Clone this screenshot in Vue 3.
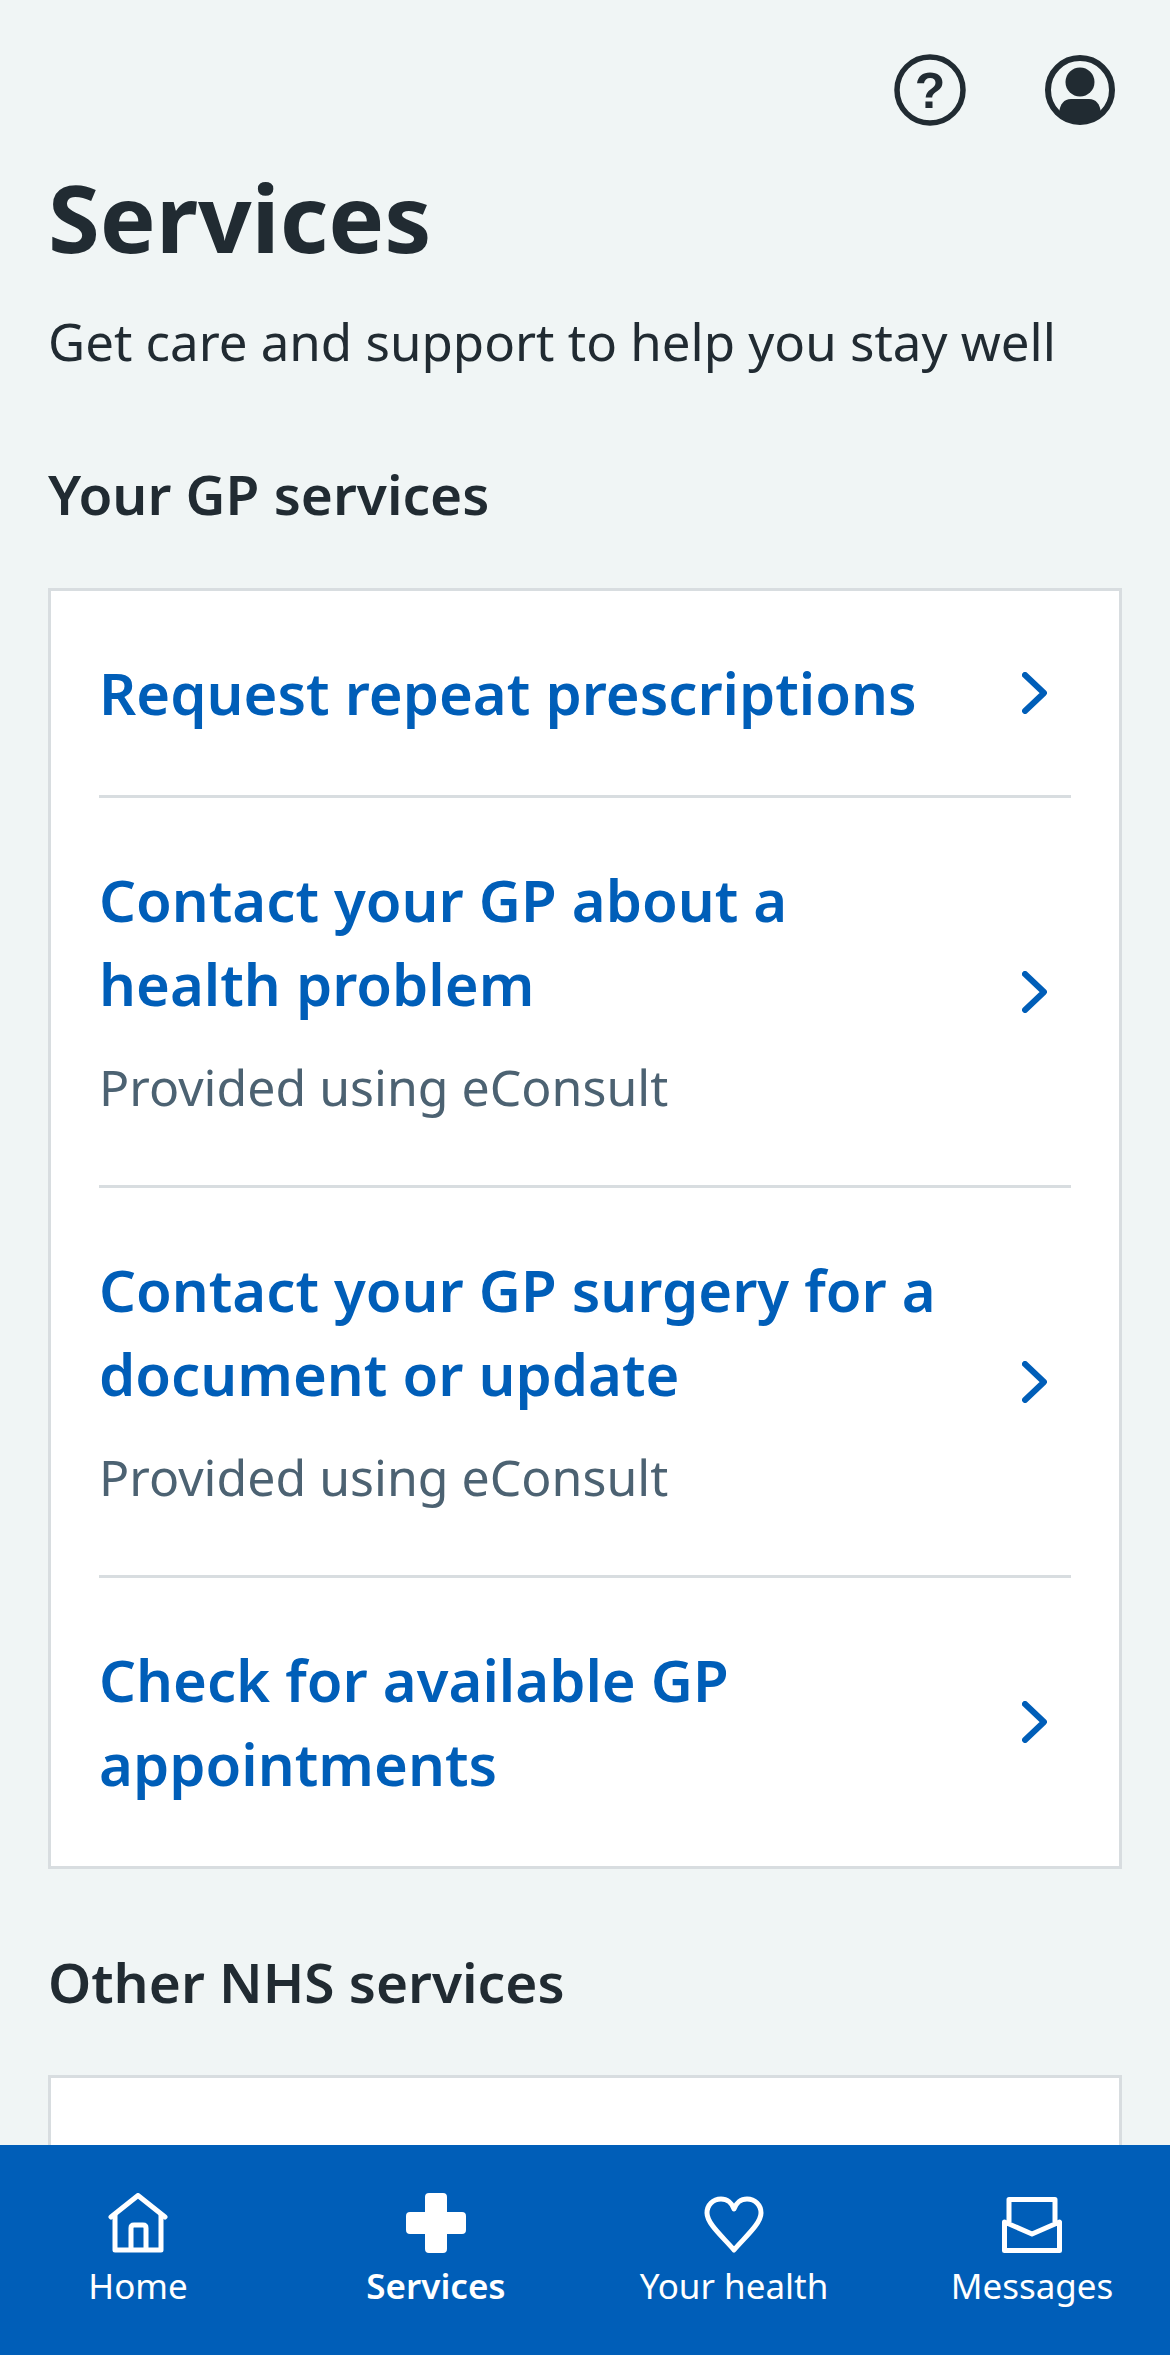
<script setup>
const rows = [
  { title: ['Request repeat prescriptions'] },
  { title: ['Contact your GP about a', 'health problem'], sub: 'Provided using eConsult' },
  { title: ['Contact your GP surgery for a', 'document or update'], sub: 'Provided using eConsult' },
  { title: ['Check for available GP', 'appointments'] },
]
</script>

<template>
  <div class="page">
    <main class="main">
      <div class="top">
        <svg class="top-icon" viewBox="0 0 72 72" width="72" height="72">
          <circle cx="36" cy="36" r="33" fill="none" stroke="#212b32" stroke-width="5.5" />
          <text class="q" x="36" y="54" text-anchor="middle">?</text>
        </svg>
        <svg class="top-icon" viewBox="0 0 72 72" width="72" height="72">
          <circle cx="36" cy="36" r="32" fill="none" stroke="#212b32" stroke-width="6" />
          <circle cx="36" cy="28" r="14.5" fill="#212b32" />
          <path d="M15 59 C16 50 20 45 27 45 H45 C52 45 56 50 57 59 C52 65 44 68 36 68 C28 68 20 65 15 59 Z" fill="#212b32" />
        </svg>
      </div>
      <h1 class="title">Services</h1>
      <p class="lead">Get care and support to help you stay well</p>
      <h2 class="section">Your GP services</h2>
      <div class="card">
        <a v-for="(r, i) in rows" :key="i" class="row">
          <div class="row-text">
            <div class="link">
              <span v-for="l in r.title" :key="l" class="line">{{ l }}</span>
            </div>
            <div v-if="r.sub" class="sub">{{ r.sub }}</div>
          </div>
          <svg class="chev" viewBox="0 0 25 42" width="25" height="42">
            <path d="M3 3 L22 21 L3 39" fill="none" stroke="#005eb8" stroke-width="6" stroke-linecap="round" stroke-linejoin="round" />
          </svg>
        </a>
      </div>
      <h2 class="section second">Other NHS services</h2>
      <div class="card tall"></div>
    </main>
    <nav class="nav">
      <div class="item">
        <svg viewBox="0 0 60 60" width="60" height="60">
          <path d="M3 24 L30 2.5 L57 24" fill="none" stroke="#fff" stroke-width="5" stroke-linecap="round" stroke-linejoin="round" />
          <path d="M7 21 V57 H53 V21" fill="none" stroke="#fff" stroke-width="5" stroke-linejoin="round" />
          <path d="M23 57 V35 Q23 32 26 32 H35 Q38 32 38 35 V57" fill="none" stroke="#fff" stroke-width="5" />
        </svg>
        <span>Home</span>
      </div>
      <div class="item active">
        <svg viewBox="0 0 60 60" width="60" height="60">
          <path d="M19 4 Q19 0 23 0 H37 Q41 0 41 4 V19 H56 Q60 19 60 23 V37 Q60 41 56 41 H41 V56 Q41 60 37 60 H23 Q19 60 19 56 V41 H4 Q0 41 0 37 V23 Q0 19 4 19 H19 Z" fill="#fff" />
        </svg>
        <span>Services</span>
      </div>
      <div class="item">
        <svg viewBox="0 0 60 60" width="60" height="60">
          <path d="M30 57 C20 45 3 31 3 20 C3 12 9 6 17 6 C23 6 28 10 30 16 C32 10 37 6 43 6 C51 6 57 12 57 20 C57 31 40 45 30 57 Z" fill="none" stroke="#fff" stroke-width="5" stroke-linejoin="round" />
        </svg>
        <span>Your health</span>
      </div>
      <div class="item">
        <svg viewBox="0 0 60 60" width="60" height="60">
          <path d="M7 29 V6.5 H53 V29" fill="none" stroke="#fff" stroke-width="5" stroke-linejoin="round" />
          <path d="M2.5 29 L30 41 L57.5 29 V57.5 H2.5 Z" fill="none" stroke="#fff" stroke-width="5" stroke-linejoin="round" />
        </svg>
        <span>Messages</span>
      </div>
    </nav>
  </div>
</template>

<style>
html, body { margin: 0; padding: 0; }
</style>

<style scoped>
.page {
  width: 1170px;
  height: 2355px;
  display: flex;
  flex-direction: column;
  overflow: hidden;
  background: #f0f5f5;
  color: #212b32;
  font-family: "Noto Sans", "Open Sans", sans-serif;
}
.main {
  flex: 1;
  min-height: 0;
  overflow: hidden;
  padding: 0 48px;
}
.top {
  display: flex;
  justify-content: flex-end;
  gap: 78px;
  padding: 54px 6px 0 0;
}
.top-icon { display: block; }
.q {
  font-family: "Liberation Sans", sans-serif;
  font-weight: 700;
  font-size: 50px;
  fill: #212b32;
}
.title {
  margin: 31px 0 0;
  font-size: 94px;
  line-height: 120px;
  font-weight: 700;
}
.lead {
  margin: 28px 0 0;
  font-size: 51px;
  line-height: 72px;
}
.section {
  margin: 81px 0 0;
  font-size: 55px;
  line-height: 72px;
  font-weight: 600;
}
.section.second { margin-top: 77px; }
.card {
  margin-top: 58px;
  background: #fff;
  border: 3px solid #d8dde0;
  padding: 0 48px;
}
.card.tall { height: 600px; margin-top: 57px; }
.row {
  display: flex;
  align-items: center;
  justify-content: space-between;
  padding: 60px 0;
  border-bottom: 3px solid #d8dde0;
}
.row:last-child { border-bottom: 0; }
.row-text { min-width: 0; }
.link {
  color: #005eb8;
  font-size: 58px;
  line-height: 84px;
  font-weight: 600;
}
.line { display: block; }
.sub {
  margin-top: 24px;
  color: #4c6272;
  font-size: 50px;
  line-height: 75px;
}
.chev { flex: none; margin-right: 24px; }
.nav {
  flex: none;
  height: 210px;
  box-sizing: border-box;
  background: #005eb8;
  color: #fff;
  display: grid;
  grid-template-columns: repeat(4, 258px);
  column-gap: 40px;
  justify-content: center;
  padding-top: 48px;
}
.item {
  display: flex;
  flex-direction: column;
  align-items: center;
  font-size: 35px;
  line-height: 48px;
}
.item svg { display: block; margin-bottom: 9px; }
.active { font-weight: 600; }
</style>
